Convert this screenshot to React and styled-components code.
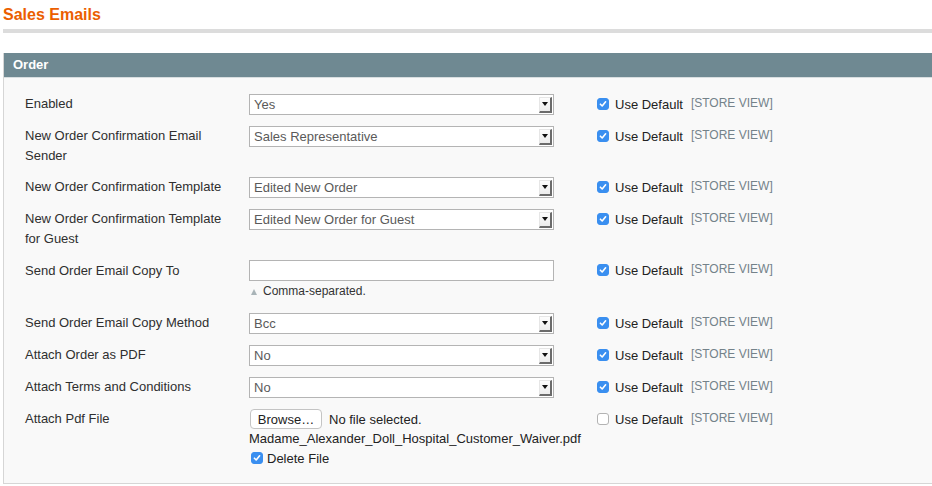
import React from "react";
import styled, { createGlobalStyle } from "styled-components";

const Global = createGlobalStyle`
  html, body { margin: 0; padding: 0; background: #fff; overflow: hidden; }
  body { font-family: "Liberation Sans", Arial, sans-serif; color: #2f2f2f; }
  #root { width: 932px; height: 486px; overflow: hidden; }
`;

const Page = styled.div`
  width: 945px;
  padding: 5px 0 0 3px;
`;

const Title = styled.h3`
  margin: 0;
  font-size: 16px;
  line-height: 20px;
  font-weight: bold;
  color: #eb5e00;
`;

const Rule = styled.div`
  height: 4px;
  background: #dcdcdc;
  margin-top: 4px;
`;

const Box = styled.div`
  margin-top: 20px;
  border: 1px solid #d6d6d6;
  border-top: 0;
  background: #f9f9f9;
`;

const Header = styled.div`
  height: 24px;
  background: #6f8992;
  border-bottom: 1px solid #d8dee0;
  color: #fff;
  font-weight: bold;
  font-size: 13px;
  line-height: 23px;
  padding-left: 9px;
`;

const Form = styled.div`
  padding: 16px 0 16px 21px;
  display: flex;
  flex-direction: column;
  gap: 11px;
`;

const Row = styled.div`
  display: grid;
  grid-template-columns: 224px 348px auto;
  align-items: start;
`;

const Label = styled.div`
  font-size: 13px;
  line-height: 20px;
  width: 205px;
  padding-top: ${(p) => p.$pad || 0}px;
`;

const Field = styled.div`
  display: flex;
  flex-direction: column;
`;

const SelectBox = styled.div`
  width: 305px;
  height: 21px;
  box-sizing: border-box;
  border: 1px solid #b4b4b4;
  background: #fff;
  display: flex;
  align-items: center;
  justify-content: space-between;
  padding-left: 4px;
  font-size: 13px;
  color: #5a5a5a;
`;

const ArrowBtn = styled.div`
  width: 13px;
  height: 16px;
  margin-right: 1px;
  box-sizing: border-box;
  background: linear-gradient(#fdfdfd, #ececec);
  border-right: 2px solid #6b6b6b;
  border-bottom: 2px solid #6b6b6b;
  border-top: 1px solid #e6e6e6;
  border-left: 1px solid #e6e6e6;
  display: flex;
  align-items: center;
  justify-content: center;
  &::after {
    content: "";
    border-left: 3.5px solid transparent;
    border-right: 3.5px solid transparent;
    border-top: 4px solid #111;
  }
`;

const TextInput = styled.div`
  width: 305px;
  height: 21px;
  box-sizing: border-box;
  border: 1px solid #b4b4b4;
  background: #fff;
`;

const Hint = styled.div`
  display: flex;
  align-items: center;
  gap: 6px;
  font-size: 12px;
  line-height: 21px;
  padding-left: 2px;
  color: #333;
  &::before {
    content: "";
    border-left: 3.5px solid transparent;
    border-right: 3.5px solid transparent;
    border-bottom: 6px solid #a9b4b8;
  }
`;

const Scope = styled.div`
  display: flex;
  align-items: center;
  height: 20px;
`;

const Check = styled.span`
  width: 12px;
  height: 12px;
  box-sizing: border-box;
  border-radius: 3px;
  flex: none;
  display: inline-flex;
  align-items: center;
  justify-content: center;
  background: ${(p) => (p.$on ? "#3a8ff0" : "#fff")};
  border: 1px solid ${(p) => (p.$on ? "#3a8ff0" : "#b3b3b3")};
`;

const UseDefault = styled.span`
  font-size: 13px;
  color: #222;
  margin-left: 6px;
`;

const StoreView = styled.span`
  font-size: 12px;
  color: #74828a;
  margin-left: 8px;
  margin-top: -2px;
`;

const FileLine = styled.div`
  display: flex;
  align-items: center;
  gap: 7px;
  height: 20px;
  font-size: 13px;
  color: #222;
`;

const BrowseBtn = styled.div`
  width: 72px;
  height: 20px;
  box-sizing: border-box;
  border: 1px solid #c4c4c4;
  border-radius: 4px;
  background: #fff;
  font-size: 13px;
  color: #222;
  display: flex;
  align-items: center;
  justify-content: center;
  margin-left: 1px;
`;

const FileName = styled.div`
  font-size: 13px;
  line-height: 20px;
  color: #222;
`;

const DeleteLine = styled.div`
  display: flex;
  align-items: center;
  gap: 4px;
  height: 18px;
  padding-left: 2px;
  font-size: 13px;
  color: #222;
`;

const Tick = () => (
  <svg width="8" height="8" viewBox="0 0 8 8">
    <path d="M1.4 4.2 L3.2 6 L6.6 1.8" fill="none" stroke="#fff" strokeWidth="1.6" strokeLinecap="round" strokeLinejoin="round" />
  </svg>
);

const Checkbox = ({ on }) => <Check $on={on}>{on && <Tick />}</Check>;

const ScopeCell = ({ on = true }) => (
  <Scope>
    <Checkbox on={on} />
    <UseDefault>Use Default</UseDefault>
    <StoreView>[STORE VIEW]</StoreView>
  </Scope>
);

const Select = ({ value }) => (
  <SelectBox>
    <span>{value}</span>
    <ArrowBtn />
  </SelectBox>
);

const selectRows = [
  ["Enabled", "Yes"],
  ["New Order Confirmation Email Sender", "Sales Representative"],
  ["New Order Confirmation Template", "Edited New Order"],
  ["New Order Confirmation Template for Guest", "Edited New Order for Guest"],
];

const lowerRows = [
  ["Send Order Email Copy Method", "Bcc"],
  ["Attach Order as PDF", "No"],
  ["Attach Terms and Conditions", "No"],
];

export default function App() {
  return (
    <>
      <Global />
      <Page>
        <Title>Sales Emails</Title>
        <Rule />
        <Box>
          <Header>Order</Header>
          <Form>
            {selectRows.map(([l, v]) => (
              <Row key={l}>
                <Label>{l}</Label>
                <Select value={v} />
                <ScopeCell />
              </Row>
            ))}
            <Row>
              <Label $pad={1}>Send Order Email Copy To</Label>
              <Field>
                <TextInput />
                <Hint>Comma-separated.</Hint>
              </Field>
              <ScopeCell />
            </Row>
            {lowerRows.map(([l, v]) => (
              <Row key={l}>
                <Label>{l}</Label>
                <Select value={v} />
                <ScopeCell />
              </Row>
            ))}
            <Row>
              <Label>Attach Pdf File</Label>
              <Field>
                <FileLine>
                  <BrowseBtn>Browse…</BrowseBtn>
                  <span>No file selected.</span>
                </FileLine>
                <FileName>Madame_Alexander_Doll_Hospital_Customer_Waiver.pdf</FileName>
                <DeleteLine>
                  <Checkbox on />
                  <span>Delete File</span>
                </DeleteLine>
              </Field>
              <ScopeCell on={false} />
            </Row>
          </Form>
        </Box>
      </Page>
    </>
  );
}
